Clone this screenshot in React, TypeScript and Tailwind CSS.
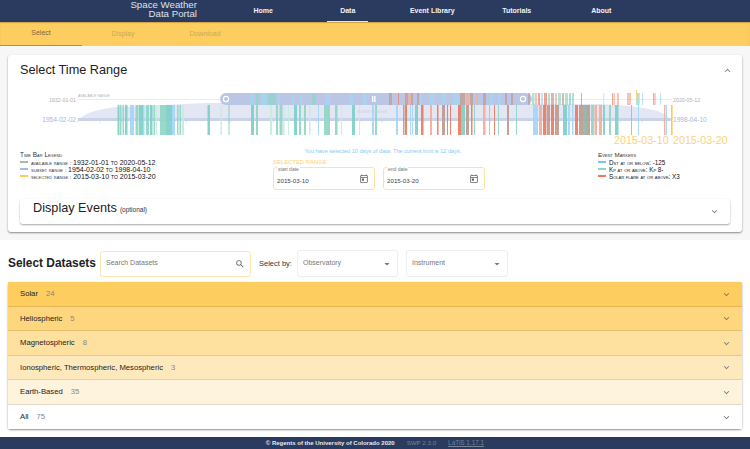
import React from 'react';
import { MdExpandLess, MdExpandMore, MdSearch, MdOutlineToday, MdArrowDropDown } from 'react-icons/md';

const TEAL = '#8fd6c6';
const PALE = '#c6ebe0';
const BLUE = '#a3d6f7';
const RED = '#ec7a60';
const SALMON = '#f5ab98';
const BROWN = '#c09a8c';
const DTEAL = '#7fcfc8';

type Bar = [number, number, string];

// lower timeline, event markers inside the subset range
const lowerBars: Bar[] = [
  [117.5, 2, DTEAL], [120, 1.5, TEAL], [122.5, 1.5, TEAL], [125, 2.5, DTEAL], [130, 4, BLUE], [135.5, 3, TEAL], [139, 4, DTEAL],
  [143, 1.5, BLUE], [146, 3, TEAL], [150, 2.5, DTEAL], [153.5, 1.5, TEAL], [156, 1, PALE], [160, 6, TEAL], [166, 6, DTEAL], [172, 3, BLUE],
  [177, 1.5, TEAL], [179.5, 1.5, TEAL], [182, 2, PALE], [207.5, 2.5, DTEAL], [220.5, 1.5, PALE], [228.5, 1, DTEAL],
  [251, 3, DTEAL], [256, 2, TEAL], [270, 2, PALE], [276, 2, TEAL], [279.5, 3, TEAL], [283, 1.5, PALE], [288, 1, PALE], [294, 3, DTEAL],
  [299, 2, TEAL], [304, 2, TEAL], [309, 1.5, PALE], [318, 1, BLUE], [324, 6, TEAL], [335, 2.5, TEAL], [341, 1, PALE], [352, 3, DTEAL],
  [359, 1, PALE], [372, 2, BLUE], [375, 2, TEAL], [396, 2, BLUE], [403, 1.5, BROWN], [405, 2, RED], [410, 1, BLUE], [412, 1, BLUE], [415, 3, DTEAL],
  [421, 2.5, RED], [430, 2, SALMON], [437, 1.5, RED], [442, 3, BROWN], [447, 1, RED], [450, 1, RED], [458, 3, RED], [461, 4, DTEAL],
  [466, 3, BROWN], [471, 1.5, RED], [474, 1, TEAL], [483, 2.5, SALMON], [489, 1, TEAL], [494, 1, RED], [498, 1, TEAL],
  [507, 2, BROWN], [516, 1, TEAL], [533, 5, BLUE], [539, 3, SALMON], [543, 3, RED], [546.5, 3.5, BROWN], [551, 3, RED], [555, 4, BROWN],
  [563, 4, DTEAL], [568, 2, BLUE], [572, 1.5, BLUE], [575, 3, RED], [579, 4, BROWN], [583, 4, '#8fb5a5'], [587, 3, BROWN], [591, 3, TEAL],
  [594.5, 2.5, SALMON], [599, 3, SALMON], [603, 2, DTEAL], [609, 2, TEAL], [615, 3.5, DTEAL], [631, 1, DTEAL], [638, 1, BLUE], [664, 1, SALMON], [665.5, 1.5, BLUE],
];

// upper timeline, markers across the whole available range
const upperBars: Bar[] = [
  [250, 4, BLUE], [256, 3, TEAL], [262, 5, BLUE], [268, 8, TEAL], [277, 3, BLUE], [292, 2, BLUE], [300, 2, BLUE], [312, 4, TEAL], [325, 5, BLUE],
  [350, 3, BLUE], [363, 4, BLUE], [375, 1.5, BLUE], [389, 3, BROWN], [398, 1, RED], [405, 3, BROWN], [408, 3, SALMON], [411, 2, BROWN],
  [417, 2, BROWN], [420, 2, BLUE], [430, 4, BLUE], [442, 4, BLUE], [454, 5, BLUE], [460, 5, BROWN], [466, 3, SALMON], [470, 3, BROWN], [476, 1.5, SALMON],
  [483, 3, BROWN], [490, 3, BLUE], [498, 3, BLUE], [505, 2, BROWN], [511, 2, BROWN], [528, 2, BROWN],
  [532, 2.5, TEAL], [535, 2, SALMON], [538, 2, RED], [541, 2, BLUE], [544, 3, RED], [548, 2, TEAL], [551, 3, BROWN], [555, 2, SALMON], [558, 3, TEAL], [562, 2, BROWN], [565, 3, TEAL], [569, 2, DTEAL], [572, 2, TEAL],
  [581, 1, RED], [603, 1.5, PALE], [612, 1, RED], [613.5, 1.5, SALMON], [617, 2, SALMON], [627, 4, SALMON], [636, 3, TEAL], [639, 1, '#d5dc9a'], [642, 1, BLUE], [653, 1, BROWN], [654.5, 1, RED], [660, 1, BLUE],
];

const ticks = Array.from({ length: 28 }, (_, i) => 78 + i * 21.7);

function TimeChart() {
  return (
    <svg viewBox="8 85 734 60" className="block h-[60px] w-[734px]">
      <path d="M78 121 C84 114 92 110 117 107 L207 103 L600 104 C625 105 650 108 660 112 C667 115 670 118 672 121 Z" fill="#e3e7f4" />
      <line x1="78" y1="99.5" x2="672" y2="99.5" stroke="#ececec" strokeWidth="1" />
      <rect x="78" y="118" width="594" height="3" fill="#cbd3eb" />
      {ticks.map((x) => (
        <line key={x} x1={x} y1="121" x2={x} y2="122.5" stroke="#c9c9c9" strokeWidth="0.6" />
      ))}
      <rect x="220" y="93" width="312" height="12" rx="6" fill="#bac6e4" />
      {lowerBars.map(([x, w, c], i) => (
        <rect key={i} x={x} y="105" width={w} height="30" fill={c} opacity="0.92" />
      ))}
      {upperBars.map(([x, w, c], i) => (
        <rect key={i} x={x} y="93" width={w} height="12" fill={c} opacity="0.7" />
      ))}
      <rect x="636" y="90" width="1" height="10" fill="#fdd27a" />
      <rect x="671" y="105" width="1.6" height="30" fill="#fdc95c" />
      <circle cx="226" cy="99" r="2.6" fill="none" stroke="#fff" strokeWidth="1.2" />
      <circle cx="523" cy="99" r="2.6" fill="none" stroke="#fff" strokeWidth="1.2" />
      <rect x="372" y="96" width="1.3" height="6" fill="#fff" />
      <rect x="374.2" y="96" width="1.3" height="6" fill="#fff" />
      <g fontFamily="'Liberation Sans', sans-serif">
        <text x="76" y="101.5" textAnchor="end" fontSize="5.3" fill="#b0b0b0">1932-01-01</text>
        <text x="76" y="121.5" textAnchor="end" fontSize="6.6" fill="#a9b8e0">1954-02-02</text>
        <text x="78" y="97" fontSize="3.5" fill="#b4b4b4">AVAILABLE RANGE</text>
        <text x="357" y="113" fontSize="3.9" fill="#cdd4ea">SUBSET RANGE</text>
        <text x="673" y="101.5" fontSize="5.3" fill="#b0b0b0">2020-05-12</text>
        <text x="673" y="121.5" fontSize="6.6" fill="#a9b8e0">1998-04-10</text>
        <text x="614" y="144" fontSize="10.7" fill="#fdd27a">2015-03-10</text>
        <text x="673" y="144" fontSize="10.7" fill="#fdd27a">2015-03-20</text>
      </g>
    </svg>
  );
}

function LegendRow({ color, label, value, small }: { color: string; label: string; value: string; small?: boolean }) {
  return (
    <div className="flex h-[7px] items-center">
      <span className={`mr-[3px] h-[2px] w-[8px] ${color}`} />
      <span className="whitespace-nowrap text-[6.2px] leading-[7px] text-[#333] [font-variant:small-caps]">
        {label}
        <span className={`font-medium text-[#111] ${small ? 'text-[6.3px]' : 'text-[7px]'}`}>{value}</span>
      </span>
    </div>
  );
}

function DateField({ label, value }: { label: string; value: string }) {
  return (
    <div className="relative flex h-[23px] w-[102px] items-center justify-between rounded-[3px] border border-[#fde2a6] pl-[3px] pr-[5px] pt-[4px]">
      <span className="absolute left-[3px] top-[-1px] bg-white px-[1px] text-[5px] leading-[5px] text-[#777]">{label}</span>
      <span className="text-[6.2px] text-[#444]">{value}</span>
      <MdOutlineToday className="mb-[3px] h-[10px] w-[10px] text-[#666]" />
    </div>
  );
}

function SelectBox({ label, className }: { label: string; className: string }) {
  return (
    <div className={`flex h-[27px] items-center justify-between rounded-[3px] border border-[#eeeeee] pl-[5px] pr-[4px] ${className}`}>
      <span className="text-[7px] text-[#777]">{label}</span>
      <MdArrowDropDown className="h-[12px] w-[12px] text-[#777]" />
    </div>
  );
}

const rows = [
  { name: 'Solar', count: 24, bg: 'bg-[#fecd5f]', h: 'h-[25px]' },
  { name: 'Heliospheric', count: 5, bg: 'bg-[#fdd67d]', h: 'h-[24px]' },
  { name: 'Magnetospheric', count: 8, bg: 'bg-[#fee09f]', h: 'h-[25px]' },
  { name: 'Ionospheric, Thermospheric, Mesospheric', count: 3, bg: 'bg-[#fee9bd]', h: 'h-[24px]' },
  { name: 'Earth-Based', count: 35, bg: 'bg-[#fef3dd]', h: 'h-[25px]' },
  { name: 'All', count: 75, bg: 'bg-white', h: 'h-[24px]' },
];

const navItems = ['Home', 'Data', 'Event Library', 'Tutorials', 'About'];

export default function App() {
  return (
    <div className="flex h-[449px] w-[750px] flex-col overflow-hidden bg-white font-['Liberation_Sans',sans-serif]">
      {/* Top nav */}
      <header className="flex h-[22px] shrink-0 bg-[#2a3b5f] text-white">
        <div className="w-[197px] text-right text-[9.7px] font-light leading-[9px] text-[#dfe3ea]">
          Space Weather
          <br />
          Data Portal
        </div>
        <nav className="ml-[24px] flex">
          {navItems.map((item) => (
            <div key={item} className="relative flex h-[22px] w-[84.5px] items-center justify-center text-[7px] font-bold text-[#f1f3f6]">
              {item}
              {item === 'Data' && <span className="absolute bottom-0 left-[21px] h-[1px] w-[41px] bg-[#fde3a8]" />}
            </div>
          ))}
        </nav>
      </header>

      {/* Sub tabs */}
      <div className="flex h-[24px] shrink-0 bg-[#fecd5f] shadow-[inset_0_1px_1px_rgba(120,90,20,0.35)]">
        <div className="flex w-[82px] items-center justify-center border-b-[1.5px] border-[#8a94a8] text-[7px] font-medium text-[#7b6a3c]">Select</div>
        <div className="flex w-[82px] items-center justify-center text-[7px] text-[#c9ab5c]">Display</div>
        <div className="flex w-[82px] items-center justify-center text-[7px] text-[#c9ab5c]">Download</div>
      </div>

      {/* Time range */}
      <section className="h-[194px] shrink-0 bg-[#f7f7f7] px-[8px] pt-[9px]">
        <div className="h-[177px] rounded-[3px] bg-white shadow-[0_1px_2px_rgba(0,0,0,0.45)]">
          <div className="flex h-[30px] items-center justify-between pl-[12px] pr-[9px] pt-[1px]">
            <h2 className="text-[12.7px] font-medium text-[#222]">Select Time Range</h2>
            <MdExpandLess className="h-[11px] w-[11px] text-[#777]" />
          </div>
          <TimeChart />
          <div className="flex h-[49px] pl-[12px]">
            <div className="w-[253px] pt-[6px]">
              <div className="mb-[0.5px] h-[7px] text-[6.4px] leading-[7px] text-[#333] [font-variant:small-caps]">Time Bar Legend</div>
              <LegendRow color="bg-[#b3b3b3]" label="available range : " value="1932-01-01 to 2020-05-12" />
              <LegendRow color="bg-[#a9b8e0]" label="subset range : " value="1954-02-02 to 1998-04-10" />
              <LegendRow color="bg-[#fdc95c]" label="selected range : " value="2015-03-10 to 2015-03-20" />
            </div>
            <div className="w-[212px]">
              <div className="mt-[3px] h-[7px] whitespace-nowrap pl-[8px] text-center text-[5.6px] leading-[7px] text-[#86c8f7]">
                You have selected 10 days of data. The current limit is 12 days.
              </div>
              <div className="mt-[4px] h-[7px] text-[5.9px] leading-[7px] text-[#fdd27a]">SELECTED RANGE</div>
              <div className="mt-[1px] flex gap-[8px]">
                <DateField label="start date" value="2015-03-10" />
                <DateField label="end date" value="2015-03-20" />
              </div>
            </div>
            <div className="ml-[113px] pt-[6px]">
              <div className="mb-[0.5px] h-[7px] text-[6.2px] leading-[7px] text-[#333] [font-variant:small-caps]">Event Markers</div>
              <LegendRow small color="bg-[#7cc4f8]" label="" value="Dst at or below: -125" />
              <LegendRow small color="bg-[#8fd6c0]" label="" value="Kp at or above: Kp 8-" />
              <LegendRow small color="bg-[#ec7a60]" label="" value="Solar flare at or above: X3" />
            </div>
          </div>
          <div className="mx-[12px] mt-[5px] flex h-[25px] items-center justify-between rounded-[3px] bg-white pl-[13px] pr-[10px] shadow-[0_1px_2px_rgba(0,0,0,0.35)]">
            <div className="mb-[5px] flex items-baseline gap-[3px]">
              <span className="text-[12.7px] font-medium text-[#222]">Display Events</span>
              <span className="text-[6.5px] font-medium text-[#333]">(optional)</span>
            </div>
            <MdExpandMore className="h-[11px] w-[11px] text-[#777]" />
          </div>
        </div>
      </section>

      {/* Datasets */}
      <section className="flex-1 px-[8px] pt-[10px]">
        <div className="mb-[5px] flex h-[27px] items-center">
          <h2 className="mt-[1px] w-[92px] whitespace-nowrap text-[11.9px] font-bold text-[#222]">Select Datasets</h2>
          <div className="flex h-[26px] w-[151px] items-center justify-between rounded-[3px] border border-[#fde6b4] pl-[5px] pr-[5px]">
            <span className="text-[7px] text-[#777]">Search Datasets</span>
            <MdSearch className="h-[10px] w-[10px] text-[#666]" />
          </div>
          <span className="ml-[8px] w-[38px] text-[7.5px] text-[#333]">Select by:</span>
          <SelectBox label="Observatory" className="w-[101px]" />
          <SelectBox label="Instrument" className="ml-[8px] w-[102px]" />
        </div>
        <div className="rounded-[3px] shadow-[0_1px_2px_rgba(0,0,0,0.45)]">
          {rows.map((row) => (
            <div key={row.name} className={`flex items-center justify-between border-b border-black/10 pl-[12px] pr-[10px] last:border-b-0 ${row.bg} ${row.h}`}>
              <div className="flex gap-[8px] text-[7.7px]">
                <span className="text-[#222]">{row.name}</span>
                <span className="text-[#888]">{row.count}</span>
              </div>
              <MdExpandMore className="h-[11px] w-[11px] text-[#777]" />
            </div>
          ))}
        </div>
      </section>

      {/* Footer */}
      <footer className="flex h-[12px] shrink-0 items-center justify-center gap-[12px] bg-[#2a3b5f] text-[6px]">
        <span className="font-bold text-[#e8eaef]">© Regents of the University of Colorado 2020</span>
        <span className="text-[6.2px] text-[#77839b]">SWP 2.3.0</span>
        <span className="text-[6.4px] text-[#77839b] underline">LaTiS 1.17.1</span>
      </footer>
    </div>
  );
}
